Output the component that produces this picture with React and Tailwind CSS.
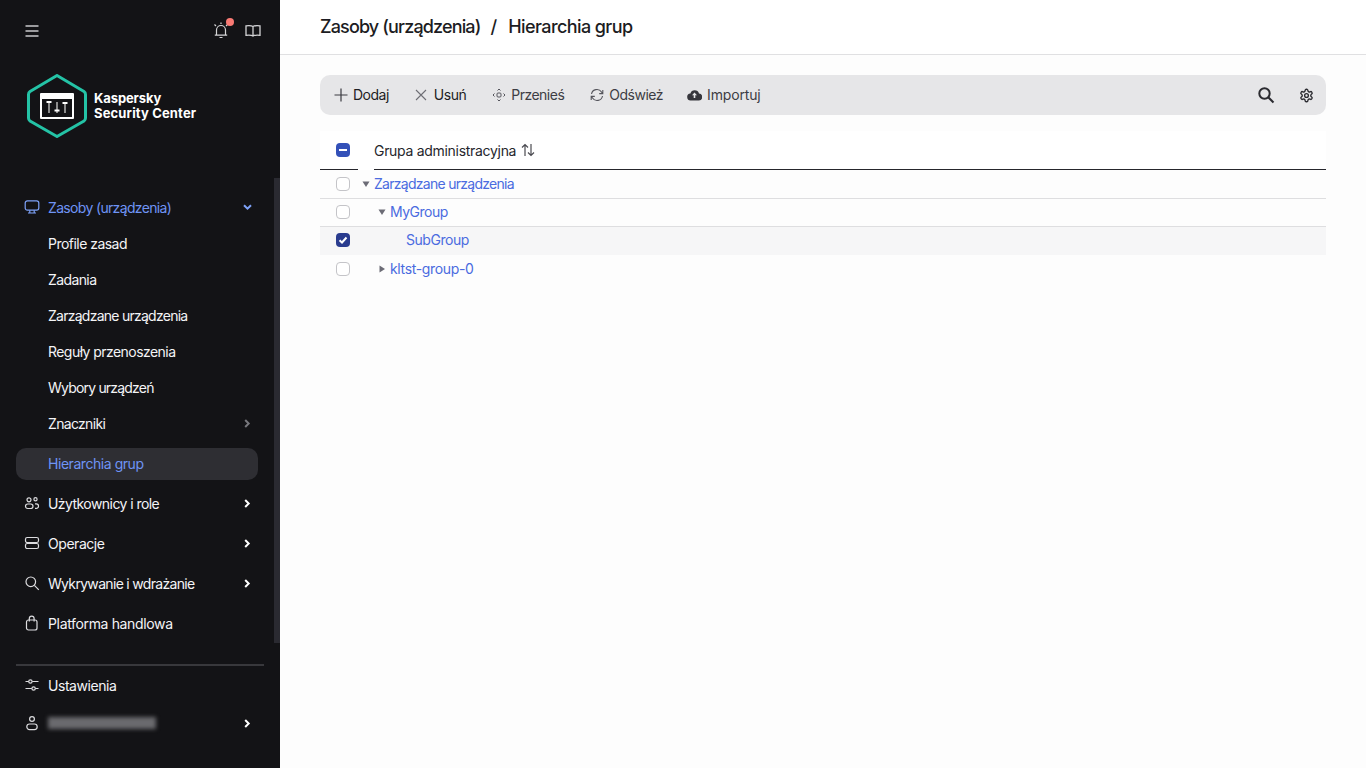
import React from "react";

function Icon({ children, size = 16, className = "" }) {
  return (
    <svg width={size} height={size} viewBox="0 0 16 16" fill="none" stroke="currentColor" strokeWidth="1.2" className={className}>
      {children}
    </svg>
  );
}

const Monitor = () => (
  <Icon><rect x="1.200" y="1.800" width="13.600" height="9.400" rx="2.200" /><path d="M5.800 11.200v2.600M10.200 11.200v2.600M4 14h8" /></Icon>
);
const Users = () => (
  <Icon><circle cx="5" cy="4.800" r="2" /><circle cx="11.500" cy="4.200" r="1.600" /><rect x="1.500" y="9" width="7.500" height="4.500" rx="2.200" /><path d="M11 8.800h1.300a2.200 2.200 0 0 1 2.200 2.200 2.200 2.200 0 0 1-2.200 2.400H11" /></Icon>
);
const Ops = () => (
  <Icon><rect x="1.500" y="2.500" width="13" height="5" rx="1.800" /><rect x="1.500" y="8.500" width="13" height="5" rx="1.800" /></Icon>
);
const Search = () => (
  <Icon><circle cx="6.800" cy="6.800" r="4.800" /><path d="M10.400 10.400l4.400 4.400" /></Icon>
);
const Bag = () => (
  <Icon><rect x="2.500" y="5" width="10.500" height="10" rx="2" /><path d="M5.300 6.500V3.500a2.400 2.400 0 0 1 4.800 0v3" /></Icon>
);
const Sliders = () => (
  <Icon><path d="M1.500 4.500h3.200M8.200 4.500h6.300M1.500 11.500h6.300M11.300 11.500h3.200" /><circle cx="6.400" cy="4.500" r="1.700" /><circle cx="9.600" cy="11.500" r="1.700" /></Icon>
);
const Person = () => (
  <Icon><circle cx="8" cy="4" r="2.400" /><rect x="2.800" y="9" width="10.400" height="5.600" rx="2.800" /></Icon>
);

const ChevR = ({ color = "#ffffff" }) => (
  <svg width="7" height="9" viewBox="0 0 7 9" fill="none" stroke={color} strokeWidth="2"><path d="M1.200 1 4.700 4.500 1.200 8" /></svg>
);
const ChevD = () => (
  <svg width="9" height="7" viewBox="0 0 9 7" fill="none" stroke="#7ea2f8" strokeWidth="2"><path d="M1 1.200 4.500 4.700 8 1.200" /></svg>
);

function NavRow({ icon, label, arrow, active, dim, h = "h-10", track }) {
  return (
    <div className={`flex items-center ${h} pl-6 pr-[29px]`}>
      <span className={`w-6 flex items-center ${active ? "text-[#7ea2f8]" : "text-[#dcdcdf]"}`}>{icon}</span>
      <span className={`text-[14px] flex-1 ${track} ${active ? "text-[#6f94f5]" : "text-[#f4f4f6]"}`}>{label}</span>
      {arrow === "right" && <ChevR color={dim ? "#77777d" : "#ffffff"} />}
      {arrow === "down" && <span className="mr-[-1px]"><ChevD /></span>}
    </div>
  );
}

function Sidebar() {
  return (
    <aside className="relative w-[280px] h-[768px] shrink-0 bg-[#131316] flex flex-col">
      <div className="absolute right-0 top-[178px] w-[6px] h-[465px] bg-[#2a2a31]" />
      <div className="flex items-center h-[24px] mt-[19px] pl-6 pr-[19px]">
        <svg width="16" height="16" viewBox="0 0 16 16" stroke="#c9c9cc" strokeWidth="1.600" fill="none"><path d="M1.500 3h13M1.500 8h13M1.500 13h13" /></svg>
        <div className="flex-1" />
        <div className="relative w-4 h-4 mr-4">
          <svg width="16" height="18" viewBox="0 0 16 18" stroke="#d4d4d6" strokeWidth="1.200" fill="none" className="mt-[-1px]">
            <path d="M3.500 13V8a4.500 4.500 0 0 1 9 0v5M1.800 13.200h12.400M6.500 15.500h3" />
            <path d="M1.500 2.500l1.500 1.500M14.500 2.500L13 4M8 .5v1.500" />
          </svg>
          <span className="absolute -top-[5px] left-[13px] w-2 h-2 rounded-full bg-[#f97a74]" />
        </div>
        <svg width="16" height="14" viewBox="0 0 16 14" stroke="#d4d4d6" strokeWidth="1.300" fill="none">
          <path d="M8 2.500C6.500 1.500 3.500 1.500 1 1.800v9.500c2.500-.3 5.500-.3 7 .8 1.500-1.100 4.500-1.100 7-.8V1.800C12.500 1.500 9.500 1.500 8 2.500zM8 2.500v9.600" />
        </svg>
      </div>
      <div className="flex items-center mt-[31px] pl-[27px] h-[64px]">
        <svg width="60" height="64" viewBox="0 0 60 64" fill="none">
          <path d="M30 1.500 L57 17.500 Q58.500 18.500 58.500 20.500 L58.500 44 Q58.500 46 57 47 L30 62.500 L3 47 Q1.500 46 1.500 44 L1.500 20.500 Q1.500 18.500 3 17.500 Z" stroke="#24c3a6" strokeWidth="3" strokeLinejoin="round" />
          <rect x="13" y="19" width="34" height="26" rx="1" fill="#fff" />
          <rect x="15" y="25" width="30" height="18" fill="#131316" />
          <path d="M22 28v11M30 28v11M38 28v11" stroke="#8c8c8c" strokeWidth="2" />
          <path d="M19.500 28h5M27.500 36.500h5M35.500 29h5" stroke="#fff" strokeWidth="2" />
        </svg>
        <div className="ml-[7px] text-white text-[13px] font-bold leading-[15px]">
          <div className="tracking-[-0.1px]">Kaspersky</div>
          <div className="tracking-[0.15px]">Security Center</div>
        </div>
      </div>
      <div className="mt-[51px] flex flex-col">
        <NavRow icon={<Monitor />} label="Zasoby (urządzenia)" arrow="down" active h="h-9" track="tracking-[-0.66px]" />
        <NavRow label="Profile zasad" h="h-9" track="tracking-[-0.53px]" />
        <NavRow label="Zadania" h="h-9" track="tracking-[-0.6px]" />
        <NavRow label="Zarządzane urządzenia" h="h-9" track="tracking-[-0.74px]" />
        <NavRow label="Reguły przenoszenia" h="h-9" track="tracking-[-0.55px]" />
        <NavRow label="Wybory urządzeń" h="h-9" track="tracking-[-0.8px]" />
        <NavRow label="Znaczniki" arrow="right" dim h="h-9" track="tracking-[-0.67px]" />
        <div className="ml-4 mr-[22px] mt-[7px] mb-[3px] h-8 rounded-[10px] bg-[#2e2e33] flex items-center pl-8">
          <span className="text-[14px] tracking-[-0.45px] text-[#6f94f5] -mt-px">Hierarchia grup</span>
        </div>
        <NavRow icon={<Users />} label="Użytkownicy i role" arrow="right" track="tracking-[-0.56px]" />
        <NavRow icon={<Ops />} label="Operacje" arrow="right" track="tracking-[-0.45px]" />
        <NavRow icon={<Search />} label="Wykrywanie i wdrażanie" arrow="right" track="tracking-[-0.68px]" />
        <NavRow icon={<Bag />} label="Platforma handlowa" track="tracking-[-0.35px]" />
      </div>
      <div className="mt-[21px] mx-4 h-[2px] bg-[#38383c]" />
      <div className="-mt-px">
        <NavRow icon={<Sliders />} label="Ustawienia" track="tracking-[-0.45px]" />
      </div>
      <div className="flex items-center h-9 pl-6 pr-[29px]">
        <span className="w-6 flex items-center text-[#dcdcdf]"><Person /></span>
        <span className="w-[108px] h-[12px] bg-[#6a6a6e] blur-[2px]" />
        <span className="flex-1" />
        <ChevR />
      </div>
    </aside>
  );
}

function ToolBtn({ icon, label, cls = "", text = "text-[#3d3d44]", track = "tracking-[-0.5px]" }) {
  return (
    <div className={`flex items-center ${cls}`}>
      <span className="w-[15px] h-4 flex items-center justify-center">{icon}</span>
      <span className={`ml-[5px] -mt-px text-[14px] ${track} ${text}`}>{label}</span>
    </div>
  );
}

function Check({ state }) {
  if (state === "on")
    return (
      <span className="w-[14px] h-[14px] rounded-[4px] bg-[#2a3c8f] flex items-center justify-center">
        <svg width="10" height="10" viewBox="0 0 10 10" fill="none" stroke="#fff" strokeWidth="2"><path d="M1.500 5.200 4 7.500 8.500 2.500" /></svg>
      </span>
    );
  if (state === "mixed")
    return (
      <span className="w-[14px] h-[14px] rounded-[4px] bg-[#3350b8] flex items-center justify-center">
        <span className="w-2 h-[2px] bg-white" />
      </span>
    );
  return <span className="w-[14px] h-[14px] rounded-[4px] border border-[#c4c4c8] bg-white" />;
}

const Tri = ({ open }) => (
  <svg width="8" height="8" viewBox="0 0 8 8" fill="#6c6c76">
    {open ? <path d="M.5 1.500h7L4 7z" /> : <path d="M1.500.5v7L7 4z" />}
  </svg>
);

function TreeRow({ state, indent, tri, label, border, bg = "", h = "h-7", track, pad = "" }) {
  return (
    <div className={`flex ${h} ${pad} items-center ${bg} ${border ? "border-b border-[#dedee0]" : ""}`}>
      <span className="w-[42px] pl-4 flex items-center shrink-0"><Check state={state} /></span>
      <span className={`flex items-center ${indent}`}>
        <span className="w-2 mr-[2px] flex items-center">{tri !== undefined && <Tri open={tri} />}</span>
        <span className={`ml-[2px] -mt-px text-[14px] text-[#4a6be0] ${track}`}>{label}</span>
      </span>
    </div>
  );
}

function Main() {
  return (
    <main className="flex-1 h-[768px] bg-[#fdfdfd] flex flex-col">
      <header className="h-[55px] bg-white border-b border-[#e0e0e2] flex items-center pl-10 text-[18px] font-medium text-[#1c1c22]">
        <span className="tracking-[-0.85px] -mt-px">Zasoby (urządzenia)</span>
        <span className="ml-[10px] mr-[11px] -mt-px">/</span>
        <span className="tracking-[-0.58px] -mt-px">Hierarchia grup</span>
      </header>
      <div className="pl-10 pr-10 pt-5">
        <div className="h-10 rounded-[10px] bg-[#e6e6e8] flex items-center pl-[13px] pr-[12px]">
          <ToolBtn text="text-[#1d1d24]" icon={<svg width="14" height="14" viewBox="0 0 14 14" stroke="#3a3a40" strokeWidth="1.200"><path d="M7 .5v13M.5 7h13" /></svg>} label="Dodaj" cls="mr-[25px]" />
          <ToolBtn text="text-[#1d1d24]" icon={<svg width="12" height="12" viewBox="0 0 12 12" stroke="#6e6e74" strokeWidth="1.100"><path d="M1 1l10 10M11 1L1 11" /></svg>} label="Usuń" cls="mr-[25px]" />
          <ToolBtn icon={<svg width="14" height="14" viewBox="0 0 14 14" fill="none" stroke="#55555c" strokeWidth="1"><rect x="5" y="5" width="4" height="4" rx="1" /><path d="M5.500 2.500 7 1l1.500 1.500M5.500 11.500 7 13l1.500-1.500M2.500 5.500 1 7l1.500 1.500M11.500 5.500 13 7l-1.500 1.500" /></svg>} label="Przenieś" cls="mr-[25px]" />
          <ToolBtn icon={<svg width="14" height="14" viewBox="0 0 14 14" fill="none" stroke="#55555c" strokeWidth="1.100"><path d="M1.500 6a5.500 5.500 0 0 1 10-2l1 1.500M12.500 8a5.500 5.500 0 0 1-10 2l-1-1.500M12.800 2v3.600H9.200M1.200 12V8.400h3.600" /></svg>} label="Odśwież" cls="mr-[24px]" />
          <ToolBtn track="tracking-[-0.15px]" icon={<svg width="15" height="12" viewBox="0 0 15 12"><path d="M4 11.500a3.500 3.500 0 0 1-.6-7A4.500 4.500 0 0 1 12 4.500a3.500 3.500 0 0 1-.6 7z" fill="#36363c" /><path d="M7.500 3.500 5 6.300h1.700V9h1.600V6.300H10z" fill="#e6e6e8" /></svg>} label="Importuj" />
          <div className="flex-1" />
          <svg width="18" height="18" viewBox="0 0 18 18" fill="none" stroke="#2b2b30" strokeWidth="2"><circle cx="7.500" cy="7.500" r="5.200" /><path d="M11.500 11.500l5 5" /></svg>
          <svg width="15" height="15" viewBox="0 0 24 24" fill="none" stroke="#2b2b30" strokeWidth="2.200" strokeLinecap="round" strokeLinejoin="round" className="ml-[24px]">
            <path d="M12.220 2h-.44a2 2 0 0 0-2 2v.18a2 2 0 0 1-1 1.730l-.43.25a2 2 0 0 1-2 0l-.15-.08a2 2 0 0 0-2.730.73l-.22.38a2 2 0 0 0 .73 2.730l.15.1a2 2 0 0 1 1 1.720v.51a2 2 0 0 1-1 1.740l-.15.09a2 2 0 0 0-.73 2.730l.22.38a2 2 0 0 0 2.730.73l.15-.08a2 2 0 0 1 2 0l.43.25a2 2 0 0 1 1 1.730V20a2 2 0 0 0 2 2h.44a2 2 0 0 0 2-2v-.18a2 2 0 0 1 1-1.730l.43-.25a2 2 0 0 1 2 0l.15.08a2 2 0 0 0 2.730-.73l.22-.39a2 2 0 0 0-.73-2.730l-.15-.08a2 2 0 0 1-1-1.740v-.5a2 2 0 0 1 1-1.740l.15-.09a2 2 0 0 0 .73-2.730l-.22-.38a2 2 0 0 0-2.730-.73l-.15.08a2 2 0 0 1-2 0l-.43-.25a2 2 0 0 1-1-1.730V4a2 2 0 0 0-2-2z" />
            <circle cx="12" cy="12" r="3" />
          </svg>
        </div>
        <div className="mt-4 flex h-[39px] bg-white">
          <div className="w-[38px] border-b border-[#26262c] flex items-center pl-4 shrink-0"><Check state="mixed" /></div>
          <div className="ml-4 flex-1 border-b border-[#26262c] flex items-center text-[14px] text-[#26262c] tracking-[-0.3px]">
            <span>Grupa administracyjna</span>
            <svg width="14" height="14" viewBox="0 0 14 14" fill="none" stroke="#4a4a50" strokeWidth="1.200" className="ml-[5px]"><path d="M4 13V1.500M1 4.500l3-3 3 3M10 1v11.500M7 9.500l3 3 3-3" /></svg>
          </div>
        </div>
        <TreeRow indent="" tri={true} label="Zarządzane urządzenia" border h="h-[29px]" track="tracking-[-0.72px]" />
        <TreeRow indent="ml-4" tri={true} label="MyGroup" border h="h-7" pad="pb-px" track="tracking-[-0.5px]" />
        <TreeRow state="on" indent="ml-8" label="SubGroup" bg="bg-[#f6f6f7]" h="h-7" pad="pb-[2px]" track="tracking-[-0.45px]" />
        <TreeRow indent="ml-4" tri={false} label="kltst-group-0" h="h-7" track="tracking-[-0.35px]" />
      </div>
    </main>
  );
}

export default function App() {
  return (
    <div className="flex w-[1366px] h-[768px] overflow-hidden" style={{ fontFamily: "Inter, 'Noto Sans', sans-serif" }}>
      <Sidebar />
      <Main />
    </div>
  );
}
